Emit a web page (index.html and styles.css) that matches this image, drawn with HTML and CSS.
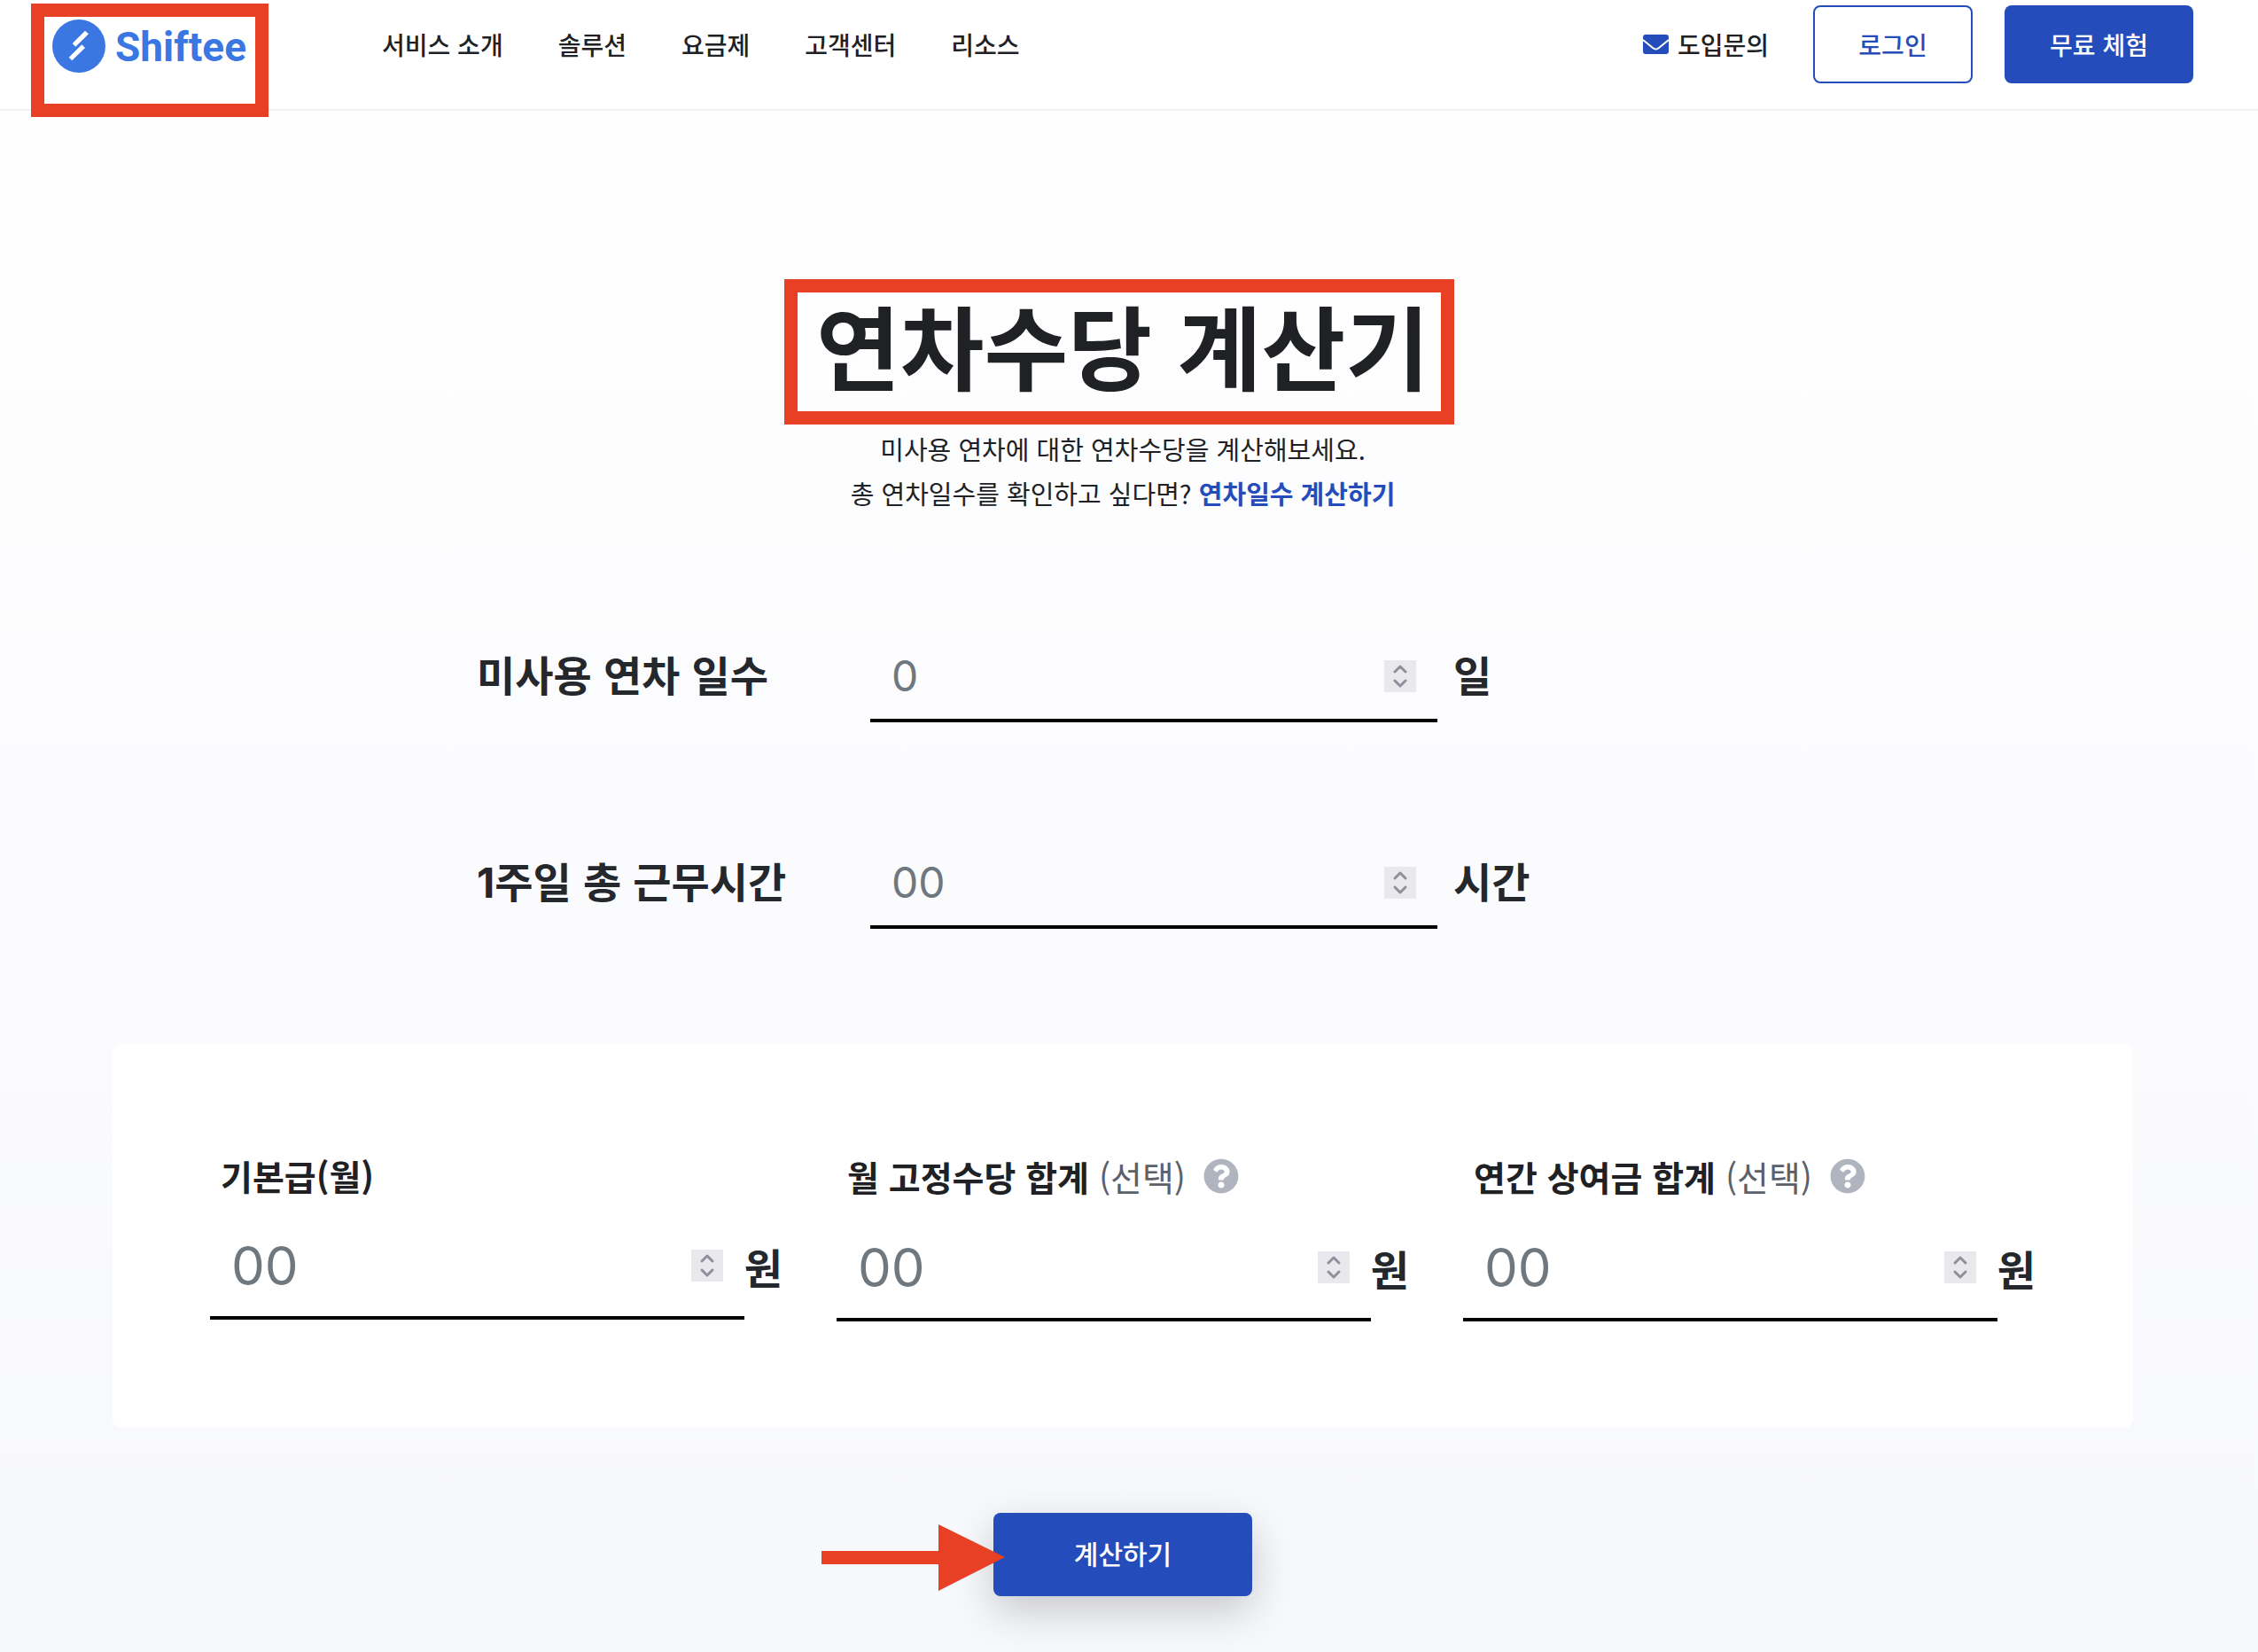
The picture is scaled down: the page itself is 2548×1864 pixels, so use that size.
FILE: index.html
```html
<!DOCTYPE html>
<html lang="ko">
<head>
<meta charset="utf-8">
<meta name="viewport" content="width=device-width, initial-scale=1">
<title>연차수당 계산기 | Shiftee</title>
<link rel="stylesheet" href="styles.css">
</head>
<body>
<svg class="sprite" aria-hidden="true">
  <symbol id="chevrons" viewBox="0 0 36 36">
    <path d="M12 13l6-6 6 6M12 23l6 6 6-6" fill="none" stroke="#918f9c" stroke-width="3" stroke-linecap="round" stroke-linejoin="round"/>
  </symbol>
  <symbol id="help" viewBox="0 0 512 512">
    <path fill="#afb4bf" d="M504 256c0 137-111 248-248 248S8 393 8 256 119 8 256 8s248 111 248 248zM262.700 90c-54.500 0-89.300 23-116.500 63.800-3.500 5.300-2.400 12.400 2.700 16.300l34.700 26.300c5.200 3.900 12.600 3 16.700-2.100 17.900-22.700 30.100-35.800 57.300-35.800 20.400 0 45.700 13.100 45.700 33 0 15-12.400 22.700-32.500 34C247.100 238.500 216 254.900 216 296v4c0 6.600 5.400 12 12 12h56c6.600 0 12-5.400 12-12v-1.300c0-28.500 83.200-29.600 83.200-106.700 0-58-60.200-102-116.500-102zM256 338c-25.400 0-46 20.600-46 46s20.600 46 46 46 46-20.600 46-46-20.600-46-46-46z"/>
  </symbol>
</svg>

<header class="header">
  <a class="logo marked" href="#" aria-label="Shiftee">
    <svg class="logo-mark" viewBox="0 0 60 60" aria-hidden="true">
      <circle cx="30" cy="30" r="30" fill="#3a77e2"/>
      <path fill="#fff" d="M37 12.700l4 3.600-14.700 14.400-3.600-3.700zM33.300 28.300l3.700 3.700-14.700 14.300-3.600-3.600z"/>
    </svg>
    <span class="logo-text">Shiftee</span>
  </a>
  <nav class="nav">
    <a href="#">서비스 소개</a>
    <a href="#">솔루션</a>
    <a href="#">요금제</a>
    <a href="#">고객센터</a>
    <a href="#">리소스</a>
  </nav>
  <div class="actions">
    <a class="contact" href="#">
      <svg class="mail" viewBox="0 0 29 22" aria-hidden="true">
        <rect width="29" height="22" rx="3" fill="#244dbb"/>
        <path d="M0 6l11 9q3.500 3 7 0l11-9" fill="none" stroke="#fff" stroke-width="2"/>
      </svg>
      도입문의
    </a>
    <a class="button outline" href="#">로그인</a>
    <a class="button" href="#">무료 체험</a>
  </div>
</header>

<main class="main">
  <h1 class="title marked">연차수당 계산기</h1>
  <p class="intro">미사용 연차에 대한 연차수당을 계산해보세요.<br>총 연차일수를 확인하고 싶다면? <a href="#">연차일수 계산하기</a></p>

  <form class="form">
    <div class="row">
      <label for="days">미사용 연차 일수</label>
      <div class="field">
        <input id="days" type="number" placeholder="0">
        <button class="stepper" type="button" aria-label="증감"><svg aria-hidden="true"><use href="#chevrons"/></svg></button>
      </div>
      <span class="unit">일</span>
    </div>
    <div class="row">
      <label for="hours"><span class="digit">1</span>주일 총 근무시간</label>
      <div class="field">
        <input id="hours" type="number" placeholder="00">
        <button class="stepper" type="button" aria-label="증감"><svg aria-hidden="true"><use href="#chevrons"/></svg></button>
      </div>
      <span class="unit">시간</span>
    </div>

    <div class="card">
      <div class="pay">
        <div class="pay-head"><label for="base">기본급(월)</label></div>
        <div class="pay-body">
          <div class="field">
            <input id="base" type="number" placeholder="00">
            <button class="stepper" type="button" aria-label="증감"><svg aria-hidden="true"><use href="#chevrons"/></svg></button>
          </div>
          <span class="unit">원</span>
        </div>
      </div>
      <div class="pay">
        <div class="pay-head with-help">
          <label for="fixed">월 고정수당 합계 <span class="optional">(선택)</span></label>
          <button class="help" type="button" aria-label="도움말"><svg aria-hidden="true"><use href="#help"/></svg></button>
        </div>
        <div class="pay-body">
          <div class="field">
            <input id="fixed" type="number" placeholder="00">
            <button class="stepper" type="button" aria-label="증감"><svg aria-hidden="true"><use href="#chevrons"/></svg></button>
          </div>
          <span class="unit">원</span>
        </div>
      </div>
      <div class="pay">
        <div class="pay-head with-help">
          <label for="bonus">연간 상여금 합계 <span class="optional">(선택)</span></label>
          <button class="help" type="button" aria-label="도움말"><svg aria-hidden="true"><use href="#help"/></svg></button>
        </div>
        <div class="pay-body">
          <div class="field">
            <input id="bonus" type="number" placeholder="00">
            <button class="stepper" type="button" aria-label="증감"><svg aria-hidden="true"><use href="#chevrons"/></svg></button>
          </div>
          <span class="unit">원</span>
        </div>
      </div>
    </div>

    <div class="submit-wrap">
      <button class="submit" type="submit">계산하기</button>
      <svg class="arrow" viewBox="0 0 207 75" aria-hidden="true">
        <path fill="#e74025" d="M0 30h132V0l75 37-75 38V45H0z"/>
      </svg>
    </div>
  </form>
</main>
</body>
</html>
```

FILE: styles.css
```css
*,
*::after {
  box-sizing: border-box;
}

body {
  margin: 0;
  min-height: 100vh;
  background: linear-gradient(#fff, #f7f8fc);
  color: #202124;
  font-family: "Noto Sans CJK KR", sans-serif;
  font-size: 28px;
}

a {
  color: inherit;
  text-decoration: none;
}

button,
input {
  border: 0;
  padding: 0;
  background: none;
  color: inherit;
  font: inherit;
}

svg {
  display: block;
}

.sprite {
  position: absolute;
  width: 0;
  height: 0;
}

/* Red outline that points out a part of the page */
.marked {
  position: relative;
}

.marked::after {
  content: "";
  position: absolute;
  border: 15px solid #e74025;
  pointer-events: none;
}

.header {
  display: flex;
  align-items: flex-start;
  height: 125px;
  padding: 6px 73px 0 59px;
  border-bottom: 2px solid #f1f1f1;
  background: #fff;
  font-weight: 500;
}

.logo {
  display: flex;
  align-items: center;
  gap: 11px;
  width: 220px;
  margin-top: 16px;
  height: 60px;
  color: #3a77e2;
}

.logo::after {
  inset: -18px -24px -50px;
}

.logo-mark {
  flex: none;
  width: 60px;
  height: 60px;
}

.logo-text {
  padding-top: 2px;
  font: 700 46px/60px Roboto, sans-serif;
}

.nav {
  display: flex;
  gap: 62px;
  margin-left: 152px;
  line-height: 88px;
}

.actions {
  display: flex;
  margin-left: auto;
  line-height: 88px;
}

.contact {
  display: flex;
  align-items: center;
  gap: 10px;
  margin-right: 50px;
}

.mail {
  width: 29px;
  height: 22px;
}

.button {
  width: 213px;
  height: 88px;
  border-radius: 8px;
  background: #244dbb;
  color: #fff;
  text-align: center;
}

.outline {
  width: 180px;
  margin-right: 36px;
  border: 2px solid #244dbb;
  background: #fff;
  color: #244dbb;
  line-height: 84px;
}

.main {
  display: flex;
  flex-direction: column;
  align-items: center;
  padding: 190px 14px 63px 0;
}

.title {
  margin: 0;
  padding: 0 32px 16px;
  font-size: 103px;
  font-weight: 700;
  line-height: 148px;
}

.title::after {
  inset: 0 4px 0 -4px;
}

.intro {
  margin: 2px 0 0;
  font-size: 29px;
  line-height: 50px;
  text-align: center;
}

.intro a {
  color: #244dbb;
  font-weight: 700;
}

.form {
  width: 2280px;
  max-width: 90%;
}

.row {
  display: grid;
  grid-template-columns: 444px 640px 1fr;
  align-items: start;
  height: 233px;
  padding-left: 411px;
  color: #24272c;
  font-size: 47px;
  font-weight: 700;
  line-height: 98px;
}

.row:first-child {
  margin-top: 130px;
}

.digit {
  font-family: Inter, sans-serif;
}

.field {
  display: flex;
  align-items: center;
  min-width: 0;
  padding-top: 4px;
  border-bottom: 4px solid #000;
}

.field input {
  flex: 1;
  min-width: 0;
  height: 96px;
  padding-left: 24px;
  outline: 0;
  font-family: Inter, sans-serif;
  font-size: 48px;
  font-weight: 400;
  appearance: textfield;
}

.field input::placeholder {
  color: #6f777f;
  opacity: 1;
}

.stepper {
  width: 36px;
  height: 36px;
  margin-right: 24px;
  background: #e9e8ed;
}

.stepper svg {
  width: 36px;
  height: 36px;
}

.unit {
  padding-left: 18px;
}

.card {
  display: grid;
  grid-template-columns: repeat(3, minmax(0, 1fr));
  gap: 61px;
  padding: 117px 110px 120px;
  border-radius: 10px;
  background: #fff;
}

.pay-head {
  display: flex;
  align-items: center;
  gap: 20px;
  height: 64px;
  padding-left: 12px;
  font-size: 39px;
  font-weight: 700;
  line-height: 60px;
}

.with-help {
  height: 66px;
}

.optional {
  color: #5b606b;
  font-weight: 400;
}

.help svg {
  width: 40px;
  height: 40px;
}

.pay-body {
  display: flex;
  color: #24272c;
  font-size: 47px;
  font-weight: 700;
  line-height: 117px;
}

.pay-body .field {
  flex: 1;
  padding-top: 13px;
}

.pay-body input {
  height: 114px;
  font-size: 60px;
}

.pay-body .unit {
  flex: none;
  padding: 12px 0 0;
}

.submit-wrap {
  position: relative;
  width: 292px;
  margin: 96px auto 0;
}

.submit {
  display: block;
  width: 292px;
  height: 94px;
  padding-bottom: 4px;
  border-radius: 8px;
  background: #244dbb;
  box-shadow: 0 16px 48px rgba(0, 0, 0, 0.2);
  color: #fff;
  font-size: 30px;
  font-weight: 500;
}

.arrow {
  position: absolute;
  top: 13px;
  left: -194px;
  width: 207px;
  height: 75px;
}
```
